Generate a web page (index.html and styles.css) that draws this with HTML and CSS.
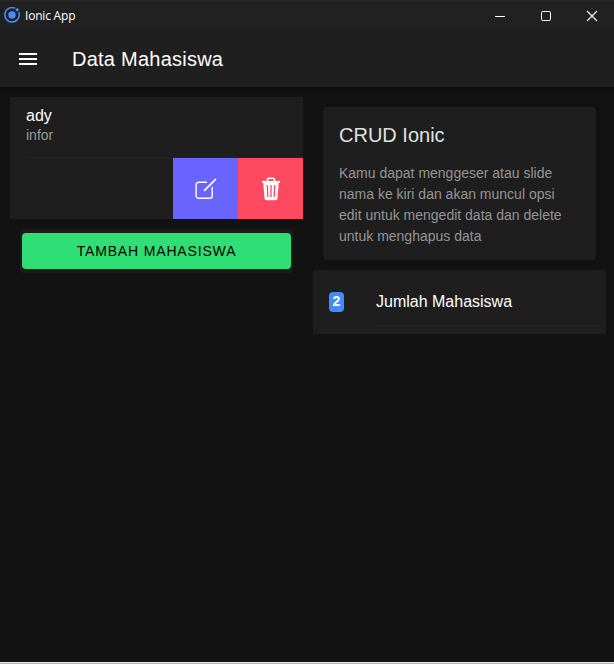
FILE: index.html
```html
<!DOCTYPE html>
<html lang="id">
<head>
<meta charset="utf-8">
<title>Ionic App</title>
<link rel="stylesheet" href="styles.css">
</head>
<body>
<div class="window">
  <div class="titlebar">
    <svg class="logo" width="16" height="16" viewBox="0 0 16 16"><path d="M11.2 1.4A7.2 7.2 0 1 0 14.7 5.2" fill="none" stroke="#4a8bfc" stroke-width="1.5"/><circle cx="8" cy="8" r="3.7" fill="#4a8bfc"/><circle cx="13.2" cy="2.8" r="1.6" fill="#4a8bfc"/></svg>
    <span class="app-name">Ionic App</span>
    <div class="controls">
      <svg width="46" height="31" viewBox="0 0 46 31"><path d="M18 16.5h10" stroke="#fff"/></svg>
      <svg width="46" height="31" viewBox="0 0 46 31"><rect x="18.5" y="11.5" width="9" height="9" rx="1.3" fill="none" stroke="#fff"/></svg>
      <svg width="46" height="31" viewBox="0 0 46 31"><path d="M18 11l10 10M28 11l-10 10" stroke="#fff" stroke-width="1.1"/></svg>
    </div>
  </div>
  <header class="toolbar">
    <svg class="menu" width="18" height="12" viewBox="0 0 18 12"><path d="M0 0h18v2H0zM0 5h18v2H0zM0 10h18v2H0z" fill="#fff"/></svg>
    <h1>Data Mahasiswa</h1>
  </header>
  <main class="content">
    <section class="column">
      <div class="student">
        <h2>ady</h2>
        <p>infor</p>
      </div>
      <div class="student-slide">
        <button class="option edit" aria-label="Edit">
          <svg width="22" height="22" viewBox="0 0 22 22" fill="none" stroke="#fff" stroke-linecap="round"><path d="M11.5 4.2H3.7A2.6 2.6 0 0 0 1.1 6.8v10.9a2.6 2.6 0 0 0 2.6 2.6h10.9a2.6 2.6 0 0 0 2.6-2.6V9.5" stroke-width="1.4"/><path d="M9.5 12.4L19 2.9" stroke-width="1.7"/><path d="M20 1.9l.5-.5" stroke-width="1.7"/></svg>
        </button>
        <button class="option delete" aria-label="Delete">
          <svg width="20" height="24" viewBox="0 0 20 24" fill="none"><path d="M6.5 4V2.6a1.4 1.4 0 0 1 1.4-1.4h4.2a1.4 1.4 0 0 1 1.4 1.4V4" stroke="#fff" stroke-width="1.6"/><path d="M1 4.8h18" stroke="#fff" stroke-width="1.8"/><path d="M2.2 5h15.6l-1.3 16.4a2 2 0 0 1-2 1.8h-9a2 2 0 0 1-2-1.8z" fill="#fff"/><path d="M6.3 8l.5 12M10 8v12M13.7 8l-.5 12" stroke="#ff4961" stroke-width="1.3"/></svg>
        </button>
      </div>
      <div class="button-card"><button class="add">TAMBAH MAHASISWA</button></div>
    </section>
    <section class="column">
      <article class="card">
        <h2>CRUD Ionic</h2>
        <p>Kamu dapat menggeser atau slide nama ke kiri dan akan muncul opsi edit untuk mengedit data dan delete untuk menghapus data</p>
      </article>
      <div class="count">
        <span class="badge">2</span>
        <div class="count-label">Jumlah Mahasiswa</div>
      </div>
    </section>
  </main>
  <footer class="window-edge"></footer>
</div>
</body>
</html>
```
FILE: styles.css
```css
* { box-sizing: border-box; }
body { margin: 0; background: #121212; color: #fff; font-family: "Liberation Sans", Arial, sans-serif; }
h1, h2, p { margin: 0; font-weight: 400; }
button { border: 0; padding: 0; font-family: inherit; }
svg { display: block; flex: none; }
.window { height: 664px; display: flex; flex-direction: column; overflow: hidden; }
.titlebar { height: 31px; flex: none; display: flex; align-items: flex-start; padding-left: 4px; background: #212121; border-top: 1px solid #292929; }
.logo { margin: 6px 5px 0 0; }
.app-name { font: 12px/16px "Open Sans", "Noto Sans", sans-serif; letter-spacing: -0.2px; padding-top: 7px; }
.controls { display: flex; margin: -1px -1px 0 auto; }
.toolbar { height: 56px; flex: none; display: flex; align-items: center; padding-left: 19px; background: #1f1f1f; box-shadow: 0 2px 4px rgba(0,0,0,.4); }
.menu { margin-right: 35px; }
.toolbar h1 { font-size: 20px; line-height: 24px; letter-spacing: .24px; }
.content { flex: 1; display: flex; gap: 10px; padding: 10px 8px 0 10px; }
.column { flex: 1; min-width: 0; }
.student { height: 61px; padding: 10px 16px; background: linear-gradient(#222, #222) 16px 100% / 100% 1px no-repeat #1e1e1e; }
.student h2 { font-size: 16px; line-height: 18px; margin-bottom: 2px; }
.student p { font-size: 14px; line-height: 17px; color: #999; }
.student-slide { height: 61px; display: flex; justify-content: flex-end; background: #1e1e1e; }
.option { width: 65px; display: flex; align-items: center; justify-content: center; }
.edit { background: #6a64ff; }
.delete { background: #ff4961; }
.button-card { margin: 10px 10px 0; height: 44px; padding: 4px 2px; background: #1b1b1b; border-radius: 4px; }
.add { display: block; width: 100%; height: 36px; border-radius: 4px; background: #2fdf75; color: #000; font-size: 14px; letter-spacing: .84px; }
.card { height: 153px; margin: 10px 10px; padding: 16px; background: #1e1e1e; border-radius: 4px; box-shadow: 0 1px 4px rgba(0,0,0,.25); }
.card h2 { font-size: 20px; line-height: 24px; color: #e0e0e0; margin-bottom: 16px; }
.card p { font-size: 14px; line-height: 21px; color: #959595; }
.count { height: 64px; display: flex; padding-left: 16px; background: #1e1e1e; }
.badge { width: 15px; height: 20px; margin: 22px 32px 0 0; border-radius: 4px; background: #428cff; font-size: 14px; font-weight: 700; line-height: 19px; text-align: center; }
.count-label { flex: 1; height: 56px; padding-top: 22px; font-size: 16px; line-height: 19px; border-bottom: 1px solid #222; }
.window-edge { height: 2px; flex: none; background: #b4b4b4; border-top: 1px solid #e6e6e6; }
```
